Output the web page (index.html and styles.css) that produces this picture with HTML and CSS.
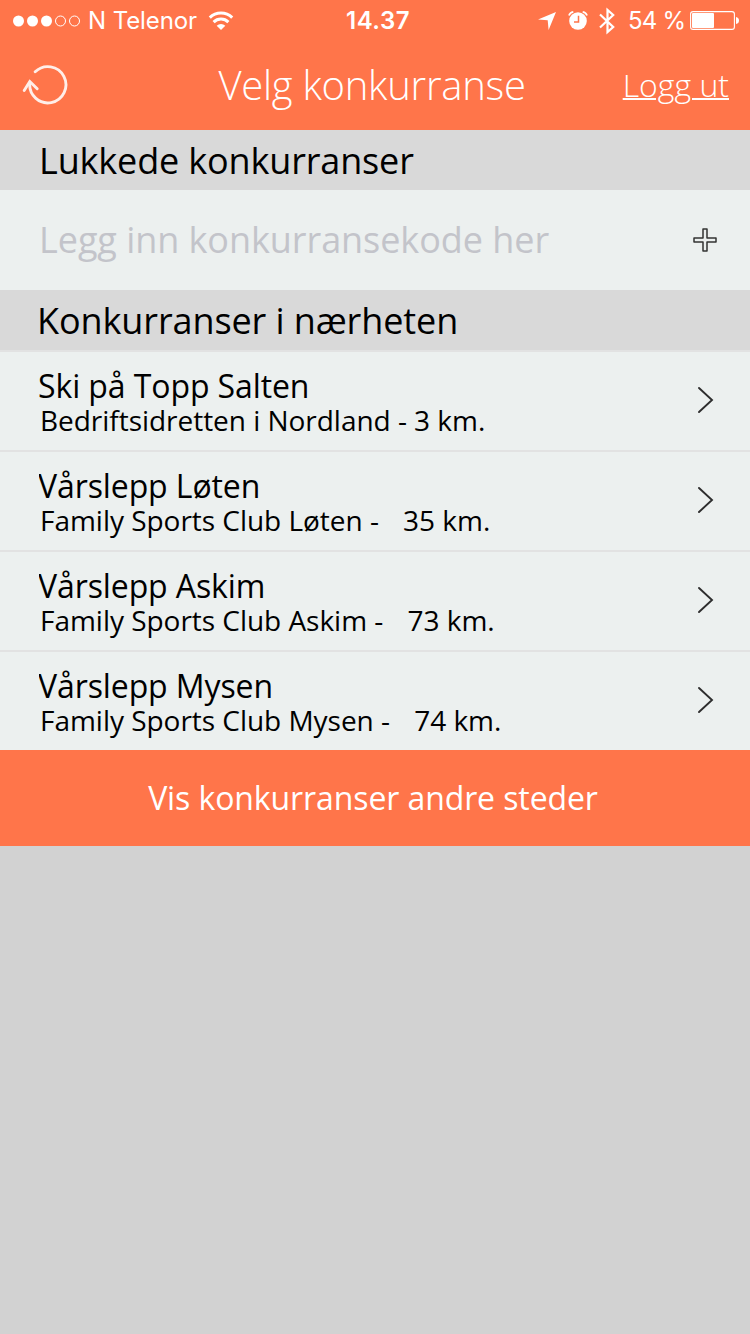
FILE: index.html
```html
<!DOCTYPE html>
<html lang="no">
<head>
  <meta charset="UTF-8">
  <meta name="viewport" content="width=device-width, initial-scale=1">
  <title>Velg konkurranse</title>
  <link rel="stylesheet" href="styles.css">
</head>
<body>
  <!-- Status bar -->
  <div class="status-bar">
    <div class="status-left">
      <svg class="signal" width="68" height="12" viewBox="0 0 68 12">
        <g fill="#fff">
          <circle cx="5.5" cy="6" r="5.5"/>
          <circle cx="19.5" cy="6" r="5.5"/>
          <circle cx="33.5" cy="6" r="5.5"/>
        </g>
        <g fill="none" stroke="#fff">
          <circle cx="47.5" cy="6" r="5"/>
          <circle cx="61.5" cy="6" r="5"/>
        </g>
      </svg>
      <span class="carrier">N Telenor</span>
      <svg class="wifi" width="26" height="20" viewBox="0 0 26 20">
        <g fill="none" stroke="#fff" stroke-width="3">
          <path d="M1.800 6.600a16 16 0 0 1 22.400 0"/>
          <path d="M5.600 11.100a10.500 10.500 0 0 1 14.800 0"/>
        </g>
        <path d="M13 19l-4.300-4.300a6.200 6.200 0 0 1 8.600 0z" fill="#fff"/>
      </svg>
    </div>
    <span class="clock">14.37</span>
    <div class="status-right">
      <svg class="location" width="18" height="18" viewBox="0 0 18 18">
        <path d="M18 0L10.600 18L9.700 8.300L0 7.400z" fill="#fff"/>
      </svg>
      <svg class="alarm" width="20" height="20" viewBox="0 0 20 20">
        <circle cx="10" cy="10" r="8.800" fill="#fff"/>
        <path d="M10.500 4.800v6.200H6" fill="none" stroke="#ff754a" stroke-width="1.500"/>
        <path d="M1 4.500q.8-3 4.300-3.600M19 4.500q-.8-3-4.300-3.600" fill="none" stroke="#fff" stroke-width="1.700"/>
      </svg>
      <svg class="bluetooth" width="17" height="28" viewBox="0 0 17 28">
        <path d="M1 7.500L14.200 20L8.500 25V3L14.200 8L1 20.500" fill="none" stroke="#fff" stroke-width="2.200"/>
      </svg>
      <span class="percent">54 %</span>
      <svg class="battery" width="49" height="20" viewBox="0 0 49 20">
        <rect x=".6" y=".6" width="43.800" height="17.800" rx="2.500" fill="none" stroke="#fff" stroke-width="1.100"/>
        <rect x="2" y="2" width="22" height="15" rx="1" fill="#fff"/>
        <path d="M46 6q3 .5 3 3.500t-3 3.500z" fill="#fff"/>
      </svg>
    </div>
  </div>

  <!-- Header -->
  <header class="header">
    <svg class="refresh" width="48" height="44" viewBox="0 0 48 44">
      <g fill="none" stroke="#fff" stroke-width="2.900" stroke-linecap="round" opacity=".88">
        <path d="M14.200 8.800A18.100 18.100 0 1 1 8.800 20"/>
        <path d="M3.200 27.500L8.800 18.500L16.200 25.800"/>
      </g>
    </svg>
    <h1>Velg konkurranse</h1>
    <a class="logout">Logg ut</a>
  </header>

  <h2 class="section-title">Lukkede konkurranser</h2>
  <div class="code-row">
    <input class="code-input" type="text" placeholder="Legg inn konkurransekode her">
    <svg class="plus" width="26" height="26" viewBox="0 0 26 26">
      <path d="M11 2h4v9h9v4h-9v9h-4v-9H2v-4h9z" fill="none" stroke="#333" stroke-width="1.500" stroke-linejoin="round"/>
    </svg>
  </div>

  <h2 class="section-title nearby">Konkurranser i nærheten</h2>
  <ul class="list">
    <li>
      <div class="info">
        <h3>Ski på Topp Salten</h3>
        <p>Bedriftsidretten i Nordland - 3 km.</p>
      </div>
      <svg class="arrow" width="18" height="28" viewBox="0 0 18 28"><path d="M2 2l13 12L2 26" fill="none" stroke="#2d2d2d" stroke-width="1.900" stroke-linecap="round"/></svg>
    </li>
    <li>
      <div class="info">
        <h3>Vårslepp Løten</h3>
        <p>Family Sports Club Løten - <span class="distance">35 km.</span></p>
      </div>
      <svg class="arrow" width="18" height="28" viewBox="0 0 18 28"><path d="M2 2l13 12L2 26" fill="none" stroke="#2d2d2d" stroke-width="1.900" stroke-linecap="round"/></svg>
    </li>
    <li>
      <div class="info">
        <h3>Vårslepp Askim</h3>
        <p>Family Sports Club Askim - <span class="distance">73 km.</span></p>
      </div>
      <svg class="arrow" width="18" height="28" viewBox="0 0 18 28"><path d="M2 2l13 12L2 26" fill="none" stroke="#2d2d2d" stroke-width="1.900" stroke-linecap="round"/></svg>
    </li>
    <li>
      <div class="info">
        <h3>Vårslepp Mysen</h3>
        <p>Family Sports Club Mysen - <span class="distance">74 km.</span></p>
      </div>
      <svg class="arrow" width="18" height="28" viewBox="0 0 18 28"><path d="M2 2l13 12L2 26" fill="none" stroke="#2d2d2d" stroke-width="1.900" stroke-linecap="round"/></svg>
    </li>
  </ul>
  <button class="show-more">Vis konkurranser andre steder</button>
</body>
</html>
```
FILE: styles.css
```css
* {
  margin: 0;
  padding: 0;
  box-sizing: border-box;
}
body {
  font-family: "Open Sans", "Noto Sans", sans-serif;
  background: #d2d2d2;
  color: #000;
  min-height: 100vh;
}
svg {
  display: block;
  flex: none;
}
/* Status bar */
.status-bar {
  display: grid;
  grid-template-columns: 346px 64px 1fr;
  align-items: center;
  height: 40px;
  padding-top: 1px;
  padding-right: 11px;
  background: #ff754a;
  color: #fff;
  font-family: Inter, sans-serif;
  font-size: 24px;
  line-height: 40px;
  white-space: nowrap;
}
.status-left,
.status-right {
  display: flex;
  align-items: center;
}
.status-left {
  padding-left: 13px;
}
.carrier {
  width: 120px;
  padding-left: 7px;
  letter-spacing: -0.1px;
}
.wifi {
  margin-left: 7px;
}
.clock {
  font-weight: 600;
  letter-spacing: 0.5px;
}
.status-right {
  justify-content: flex-end;
}
.alarm {
  margin-left: 12px;
}
.bluetooth {
  margin-left: 11px;
}
.percent {
  width: 62px;
  margin-left: 12px;
  letter-spacing: -0.8px;
}
/* Header */
.header {
  display: grid;
  grid-template-columns: 180px 1fr 180px;
  align-items: center;
  height: 90px;
  padding: 0 21px;
  background: #ff754a;
  color: #fff;
}
.header h1 {
  padding-right: 6px;
  font-size: 40px;
  font-weight: 300;
  letter-spacing: -0.25px;
  line-height: 90px;
  text-align: center;
  white-space: nowrap;
}
.logout {
  justify-self: end;
  font-size: 32px;
  font-weight: 300;
  line-height: 90px;
  text-decoration: underline;
  text-decoration-thickness: 2px;
}
/* Sections */
.section-title {
  height: 60px;
  padding-left: 40px;
  background: #d9d9d9;
  font-size: 36px;
  font-weight: 400;
  letter-spacing: -0.15px;
  line-height: 61px;
  text-indent: -1px;
}
.section-title.nearby {
  padding-left: 38px;
  letter-spacing: -0.1px;
}
.code-row {
  display: flex;
  align-items: center;
  justify-content: space-between;
  height: 100px;
  padding: 0 32px 0 39px;
  background: #ecf0ef;
}
.code-input {
  width: 600px;
  padding-bottom: 2px;
  border: none;
  outline: none;
  background: transparent;
  font-family: inherit;
  font-size: 36px;
  letter-spacing: -0.06px;
}
.code-input::placeholder {
  color: #c3c4ca;
}
/* Competition list */
.list {
  list-style: none;
}
.list li {
  display: flex;
  align-items: center;
  justify-content: space-between;
  height: 100px;
  padding: 0 35px 2px 39px;
  border-top: 2px solid #e2e2e2;
  background: #ecf0ef;
}
.info {
  width: 600px;
  padding-top: 3px;
  white-space: nowrap;
}
.info h3 {
  overflow-x: clip;
  font-size: 32px;
  font-weight: 400;
  letter-spacing: -0.1px;
  line-height: 38px;
  text-indent: -1px;
}
.info p {
  padding-left: 1px;
  font-size: 28px;
  letter-spacing: -0.03px;
  line-height: 31px;
}
.distance {
  margin-left: 17px;
}
.show-more {
  display: block;
  width: 100%;
  height: 96px;
  padding-right: 4px;
  padding-bottom: 1px;
  border: none;
  background: #ff754a;
  color: #fff;
  font-family: inherit;
  font-size: 32px;
  letter-spacing: -0.1px;
}
```
